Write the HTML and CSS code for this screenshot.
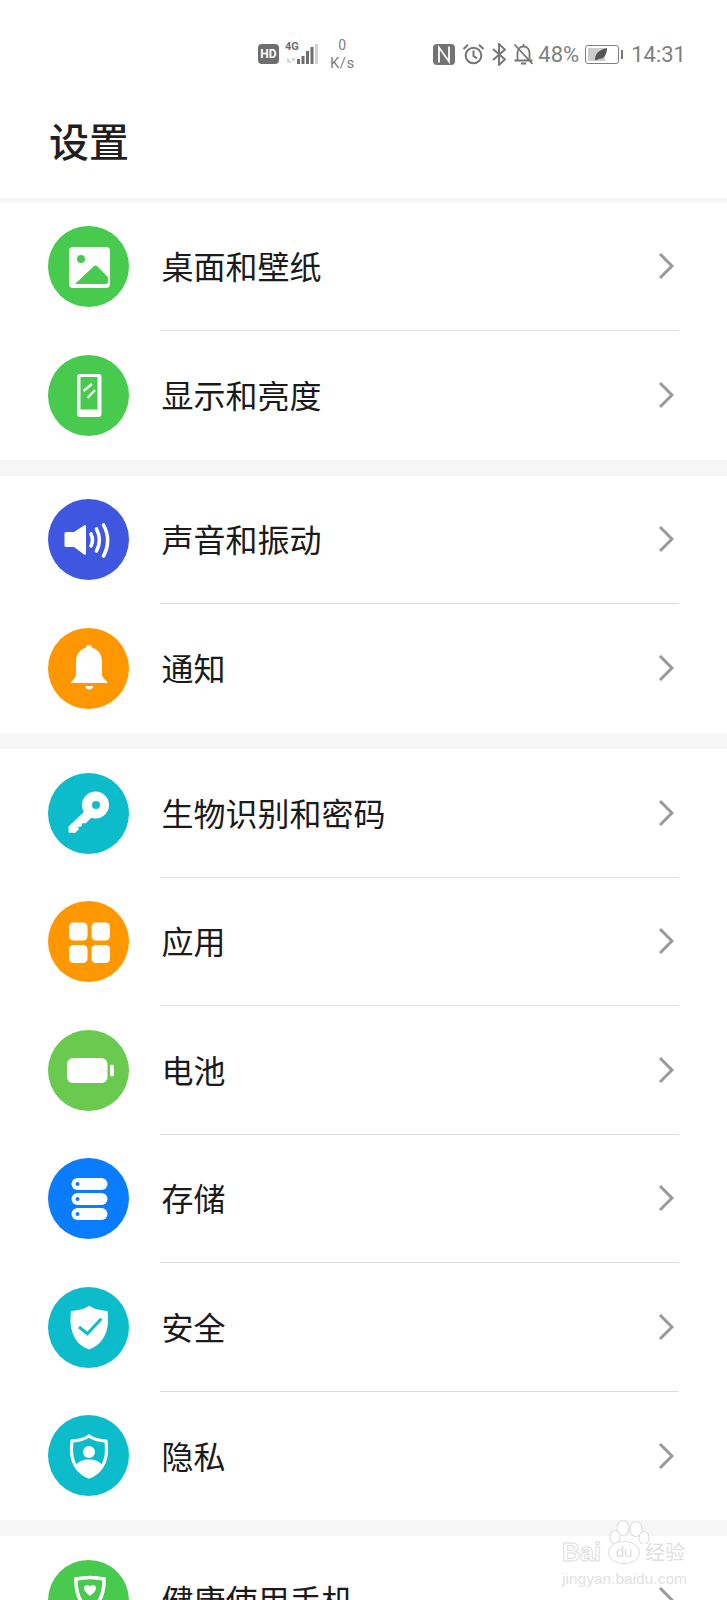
FILE: index.html
```html
<!DOCTYPE html>
<html>
<head>
  <meta charset="UTF-8">
  <title>设置</title>
  <link rel="stylesheet" href="styles.css">
</head>
<body>
  <div class="page">
    <div class="status-bar">
      <div class="status-left">
        <span class="hd-badge">HD</span>
        <div class="network">
          <span class="net-type">4G</span>
          <svg class="net-signal" width="33" height="21" viewBox="0 0 33 21">
            <path d="M3 19v-5M5 19v-3M7 14l1.500 2.500L10 14" stroke="#c9c9c9" stroke-width="1.400" fill="none"/>
            <rect x="12" y="15" width="3" height="5" fill="#6e6e6e"/>
            <rect x="16.500" y="12" width="3" height="8" fill="#6e6e6e"/>
            <rect x="21" y="7" width="3" height="13" fill="#6e6e6e"/>
            <rect x="25.500" y="3" width="3" height="17" fill="#6e6e6e"/>
            <rect x="30" y="0" width="3" height="20" fill="#d2d2d2"/>
          </svg>
        </div>
        <div class="speed"><span>0</span><span class="speed-unit">K/s</span></div>
      </div>
      <div class="status-right">
        <svg class="st-nfc" width="22" height="21" viewBox="0 0 22 21">
          <rect x="0" y="0" width="22" height="21" rx="4" fill="#737373"/>
          <path d="M6 18.500V3.500L16 17.500V2.500" stroke="#fff" stroke-width="1.800" fill="none"/>
        </svg>
        <svg class="st-alarm" width="23" height="22" viewBox="0 0 23 22">
          <circle cx="11.500" cy="12.500" r="7.800" stroke="#757575" stroke-width="2" fill="none"/>
          <path d="M11.500 7.500V13l3.500 2.500M1.500 6L6 1.800M21.500 6L17 1.800" stroke="#757575" stroke-width="2" fill="none"/>
        </svg>
        <svg class="st-bt" width="14" height="23" viewBox="0 0 14 23">
          <path d="M1 6l12 10.500L7 22V1l6 5.500L1 17" stroke="#757575" stroke-width="1.900" fill="none"/>
        </svg>
        <svg class="st-bell" width="21" height="22" viewBox="0 0 21 22">
          <path d="M4.500 17.500V10c0-4 2.500-6.500 6-6.500s6 2.500 6 6.500v7.500M1.500 17.500h18M8 20.500h5M10.500 1v2.500M1.500 1.500L19.500 21" stroke="#757575" stroke-width="1.800" fill="none"/>
        </svg>
        <span class="st-percent">48%</span>
        <svg class="st-battery" width="38" height="19" viewBox="0 0 38 19">
          <rect x="0.500" y="0.500" width="33" height="18" rx="2.500" stroke="#808080" fill="none"/>
          <rect x="3" y="3" width="17" height="13" fill="#cccccc"/>
          <path d="M10 14.500c0-6 4-9.500 12-11.500 0 6-2.500 11-8.500 11l-2.500 1.500z" fill="#555"/>
          <rect x="36" y="5" width="2" height="9" fill="#777"/>
        </svg>
        <span class="st-time">14:31</span>
      </div>
    </div>

    <div class="page-title">设置</div>

    <div class="settings">
      <div class="group">
        <div class="row">
          <div class="row-icon green">
            <svg width="80" height="80" viewBox="0 0 80 80">
              <rect x="20" y="20" width="41" height="41" rx="4" fill="#fff"/>
              <circle cx="32" cy="32" r="4" fill="#47ca4e"/>
              <path d="M26 57l18-17c2-2 3-2 5 0l9 9c1 1 1 2 1 3v3c0 1-1 2-2 2z" fill="#47ca4e"/>
            </svg>
          </div>
          <div class="row-body"><span class="row-label">桌面和壁纸</span><svg class="chevron" width="16" height="28" viewBox="0 0 16 28"><path d="M2 2l12 12L2 26" stroke="#999" stroke-width="3" fill="none"/></svg></div>
        </div>
        <div class="row">
          <div class="row-icon green">
            <svg width="80" height="80" viewBox="0 0 80 80">
              <rect x="28" y="19" width="24.500" height="43" rx="3" fill="#fff"/>
              <rect x="31.500" y="22" width="17" height="32.500" fill="#47ca4e"/>
              <path d="M34.500 36l8.500-7M38.500 43l7.500-8" stroke="#fff" stroke-width="2.400" fill="none"/>
            </svg>
          </div>
          <div class="row-body last"><span class="row-label">显示和亮度</span><svg class="chevron" width="16" height="28" viewBox="0 0 16 28"><path d="M2 2l12 12L2 26" stroke="#999" stroke-width="3" fill="none"/></svg></div>
        </div>
      </div>

      <div class="group">
        <div class="row">
          <div class="row-icon blue">
            <svg width="80" height="80" viewBox="0 0 80 80">
              <path d="M17 32h8l10-6.500c1-.6 2 0 2 1v27c0 1-1 1.600-2 1L25 47h-8c-1 0-1.500-.5-1.500-1.500v-12c0-1 .5-1.500 1.500-1.500z" fill="#fff"/>
              <path d="M42 34c2 4 2 8 0 12M47.500 29c3.700 7 3.700 15 0 22M54.500 25c5.500 10 5.500 20.500 0 31" stroke="#fff" stroke-width="3.600" stroke-linecap="round" fill="none"/>
            </svg>
          </div>
          <div class="row-body"><span class="row-label">声音和振动</span><svg class="chevron" width="16" height="28" viewBox="0 0 16 28"><path d="M2 2l12 12L2 26" stroke="#999" stroke-width="3" fill="none"/></svg></div>
        </div>
        <div class="row">
          <div class="row-icon orange">
            <svg width="80" height="80" viewBox="0 0 80 80">
              <path d="M40 17c1.800 0 3 1.100 3.200 2.800C49.500 21.500 53 27 53 34v12c0 3.500 3 5.500 6 9H21.500c3-3.500 5.500-5.500 5.500-9V34c0-7 3.500-12.500 9.800-14.200.2-1.700 1.400-2.800 3.200-2.800z" fill="#fff"/>
              <path d="M36.500 58h7.500c0 2-1.600 3.500-3.700 3.500s-3.800-1.500-3.800-3.500z" fill="#fff"/>
            </svg>
          </div>
          <div class="row-body last"><span class="row-label">通知</span><svg class="chevron" width="16" height="28" viewBox="0 0 16 28"><path d="M2 2l12 12L2 26" stroke="#999" stroke-width="3" fill="none"/></svg></div>
        </div>
      </div>

      <div class="group group-main">
        <div class="row">
          <div class="row-icon teal">
            <svg width="80" height="80" viewBox="0 0 80 80">
              <circle cx="46.500" cy="32" r="13.500" fill="#fff"/>
              <circle cx="47" cy="32" r="4" fill="#0cbccb"/>
              <path d="M37 37L19.500 53.500v6l6.500 .5 4-4-1-2 3.500-.5 1-3.500 3 .5 6-6z" fill="#fff"/>
            </svg>
          </div>
          <div class="row-body"><span class="row-label">生物识别和密码</span><svg class="chevron" width="16" height="28" viewBox="0 0 16 28"><path d="M2 2l12 12L2 26" stroke="#999" stroke-width="3" fill="none"/></svg></div>
        </div>
        <div class="row">
          <div class="row-icon orange">
            <svg width="80" height="80" viewBox="0 0 80 80">
              <rect x="20" y="20.500" width="18.500" height="18" rx="4.500" fill="#fff"/>
              <rect x="42.500" y="20.500" width="18.500" height="18" rx="4.500" fill="#fff"/>
              <rect x="20" y="43" width="18.500" height="18" rx="4.500" fill="#fff"/>
              <rect x="42.500" y="43" width="18.500" height="18" rx="4.500" fill="#fff"/>
            </svg>
          </div>
          <div class="row-body"><span class="row-label">应用</span><svg class="chevron" width="16" height="28" viewBox="0 0 16 28"><path d="M2 2l12 12L2 26" stroke="#999" stroke-width="3" fill="none"/></svg></div>
        </div>
        <div class="row">
          <div class="row-icon lime">
            <svg width="80" height="80" viewBox="0 0 80 80">
              <rect x="18" y="28" width="40.500" height="25" rx="6" fill="#fff"/>
              <rect x="61" y="34.500" width="4" height="12" rx="2" fill="#fff"/>
            </svg>
          </div>
          <div class="row-body"><span class="row-label">电池</span><svg class="chevron" width="16" height="28" viewBox="0 0 16 28"><path d="M2 2l12 12L2 26" stroke="#999" stroke-width="3" fill="none"/></svg></div>
        </div>
        <div class="row">
          <div class="row-icon azure">
            <svg width="80" height="80" viewBox="0 0 80 80">
              <rect x="22.500" y="19" width="36" height="12" rx="6" fill="#fff"/>
              <rect x="22.500" y="34" width="36" height="12" rx="6" fill="#fff"/>
              <rect x="22.500" y="49" width="36" height="12" rx="6" fill="#fff"/>
              <circle cx="28.500" cy="25" r="2" fill="#0a7cff"/>
              <circle cx="28.500" cy="40" r="2" fill="#0a7cff"/>
              <circle cx="28.500" cy="55" r="2" fill="#0a7cff"/>
            </svg>
          </div>
          <div class="row-body"><span class="row-label">存储</span><svg class="chevron" width="16" height="28" viewBox="0 0 16 28"><path d="M2 2l12 12L2 26" stroke="#999" stroke-width="3" fill="none"/></svg></div>
        </div>
        <div class="row">
          <div class="row-icon teal">
            <svg width="80" height="80" viewBox="0 0 80 80">
              <path d="M40 18.500c4 3 10.500 5 18.500 5.500.3 2 .5 6 .5 10 0 14-8 25-19 28.500-11-3.500-18.500-14.500-18.500-28.500 0-4 .2-8 .5-10 8-.5 14.500-2.500 18.500-5.500z" fill="#fff"/>
              <path d="M30 40l8.300 6.700 14-15" stroke="#0cbccb" stroke-width="3" fill="none"/>
            </svg>
          </div>
          <div class="row-body"><span class="row-label">安全</span><svg class="chevron" width="16" height="28" viewBox="0 0 16 28"><path d="M2 2l12 12L2 26" stroke="#999" stroke-width="3" fill="none"/></svg></div>
        </div>
        <div class="row">
          <div class="row-icon teal">
            <svg width="80" height="80" viewBox="0 0 80 80">
              <path d="M40 20c4 2.800 10 4.700 17 5.200.3 2 .5 5.500.5 9 0 13-7 23-17.500 26.800-10.500-3.800-17.500-13.800-17.500-26.800 0-3.500.2-7 .5-9 7-.5 13-2.400 17-5.200z" fill="none" stroke="#fff" stroke-width="3.200"/>
              <circle cx="40" cy="36" r="6" fill="#fff"/>
              <path d="M27 49c3-4 7.500-5.500 13-5.500s10 1.500 13 5.500c-2.500 5-7 9.500-13 12-6-2.500-10.500-7-13-12z" fill="#fff"/>
            </svg>
          </div>
          <div class="row-body last"><span class="row-label">隐私</span><svg class="chevron" width="16" height="28" viewBox="0 0 16 28"><path d="M2 2l12 12L2 26" stroke="#999" stroke-width="3" fill="none"/></svg></div>
        </div>
      </div>

      <div class="group">
        <div class="row">
          <div class="row-icon green">
            <svg width="80" height="80" viewBox="0 0 80 80">
              <path d="M27 19c9-2 19-2 28 0 .5 12-3.500 24-14 32-10.500-8-14.500-20-14-32z" fill="none" stroke="#fff" stroke-width="3.500"/>
              <path d="M41 36c-3-2.500-6-5-6-8 0-3.500 4.500-4 6-1.500 1.500-2.500 6-2 6 1.500 0 3-3 5.500-6 8z" fill="#fff"/>
            </svg>
          </div>
          <div class="row-body last"><span class="row-label">健康使用手机</span><svg class="chevron" width="16" height="28" viewBox="0 0 16 28"><path d="M2 2l12 12L2 26" stroke="#999" stroke-width="3" fill="none"/></svg></div>
        </div>
      </div>
    </div>

    <!-- watermark sits over the list -->
    <div class="watermark">
      <svg class="wm-toes" width="44" height="24" viewBox="0 0 44 24">
        <g fill="#ffffff" stroke="#e0e0e0" stroke-width="1.200">
          <ellipse cx="8" cy="17" rx="5" ry="6.500"/>
          <ellipse cx="16" cy="8" rx="6" ry="7.500"/>
          <ellipse cx="29" cy="9" rx="6" ry="7.500"/>
          <ellipse cx="37" cy="18" rx="5" ry="6.500"/>
        </g>
      </svg>
      <div class="wm-brand">
        <span class="wm-bai">Bai</span>
        <span class="wm-du">du</span>
        <span class="wm-cn">经验</span>
      </div>
      <div class="wm-url">jingyan.baidu.com</div>
    </div>
  </div>
</body>
</html>
```

FILE: styles.css
```css
html, body {
  margin: 0;
  padding: 0;
  height: 1600px;
  overflow: hidden;
  background: #ffffff;
}

body {
  font-family: "Noto Sans CJK SC", "Noto Sans", sans-serif;
  color: #1a1a1a;
}

.page {
  position: relative;
  width: 727px;
  height: 1600px;
  overflow: hidden;
}

/* Status bar */
.status-bar {
  height: 88px;
  padding: 20px 41px 0 258px;
  box-sizing: border-box;
  display: flex;
  align-items: center;
  justify-content: space-between;
  color: #737373;
  font-family: Roboto, "Noto Sans", sans-serif;
}

.status-left, .status-right {
  display: flex;
  align-items: center;
}

.hd-badge {
  width: 21px;
  height: 20px;
  border-radius: 4px;
  background: #6e6e6e;
  color: #ffffff;
  font-size: 12px;
  font-weight: 700;
  line-height: 20px;
  text-align: center;
}

.network {
  position: relative;
  width: 33px;
  height: 21px;
  margin-left: 6px;
}

.net-type {
  position: absolute;
  left: 0;
  top: -3px;
  font-size: 11px;
  font-weight: 700;
  line-height: 12px;
  color: #6e6e6e;
}

.net-signal {
  display: block;
}

.speed {
  display: flex;
  flex-direction: column;
  align-items: center;
  margin-left: 12px;
  font-size: 14px;
  line-height: 18px;
  color: #808080;
}

.speed-unit {
  font-size: 15px;
  letter-spacing: 0.4px;
}

.st-alarm { margin-left: 7px; }
.st-bt { margin-left: 7px; }
.st-bell { margin-left: 7px; }

.st-percent {
  margin-left: 4px;
  font-size: 22px;
  color: #808080;
}

.st-battery { margin-left: 6px; }

.st-time {
  margin-left: 8px;
  font-size: 22px;
  color: #808080;
}

/* Title */
.page-title {
  height: 110px;
  padding-left: 49px;
  font-size: 40px;
  font-weight: 500;
  line-height: 104px;
  color: #1f1f1f;
}

/* List */
.settings {
  display: flex;
  flex-direction: column;
  gap: 16px;
  padding-top: 4.5px;
  background: #f6f6f6;
}

.group {
  background: #ffffff;
}

.group-main {
  margin-top: 0.5px;
}

.row {
  height: 128.5px;
  padding-left: 48px;
  display: flex;
  align-items: center;
}

.row-icon {
  flex: none;
  width: 81px;
  height: 81px;
  border-radius: 50%;
}

.row-icon svg {
  display: block;
  margin: 0.5px;
}

.row-icon.green { background: #47ca4e; }
.row-icon.blue { background: #3f56e0; }
.row-icon.orange { background: #ff9800; }
.row-icon.teal { background: #0cbccb; }
.row-icon.lime { background: #6ac94f; }
.row-icon.azure { background: #0a7cff; }

.row-body {
  flex: 1;
  height: calc(100% + 0.5px);
  margin: 0 48px 0 31px;
  padding: 0 5px 0 1.5px;
  box-sizing: border-box;
  border-bottom: 1px solid #dddddd;
  display: flex;
  align-items: center;
  justify-content: space-between;
}

.row-body.last {
  border-bottom: none;
}

.row-label {
  margin-bottom: 2px;
  font-size: 32px;
  line-height: 44px;
  color: #1a1a1a;
}

.chevron {
  display: block;
}

/* Watermark */
.watermark {
  position: absolute;
  left: 562px;
  top: 1520px;
  width: 128px;
  color: #e2e2e2;
  font-family: "Liberation Sans", Arial, sans-serif;
}

.wm-toes {
  display: block;
  margin: 0 0 -4px 45px;
}

.wm-brand {
  display: flex;
  align-items: center;
  height: 24px;
}

.wm-bai {
  width: 46px;
  font-size: 25px;
  font-weight: 700;
  line-height: 24px;
  color: transparent;
  -webkit-text-stroke: 1px #dedede;
}

.wm-du {
  width: 32px;
  height: 23px;
  border: 1px solid #e0e0e0;
  border-radius: 50%;
  box-sizing: border-box;
  background: #ffffff;
  font-size: 15px;
  line-height: 20px;
  text-align: center;
  color: #dedede;
}

.wm-cn {
  margin-left: 5px;
  font-family: "Noto Sans CJK SC", sans-serif;
  font-size: 20px;
  line-height: 24px;
  color: #e0e0e0;
}

.wm-url {
  margin-top: 6px;
  font-size: 15.5px;
  line-height: 17px;
  white-space: nowrap;
}
```
